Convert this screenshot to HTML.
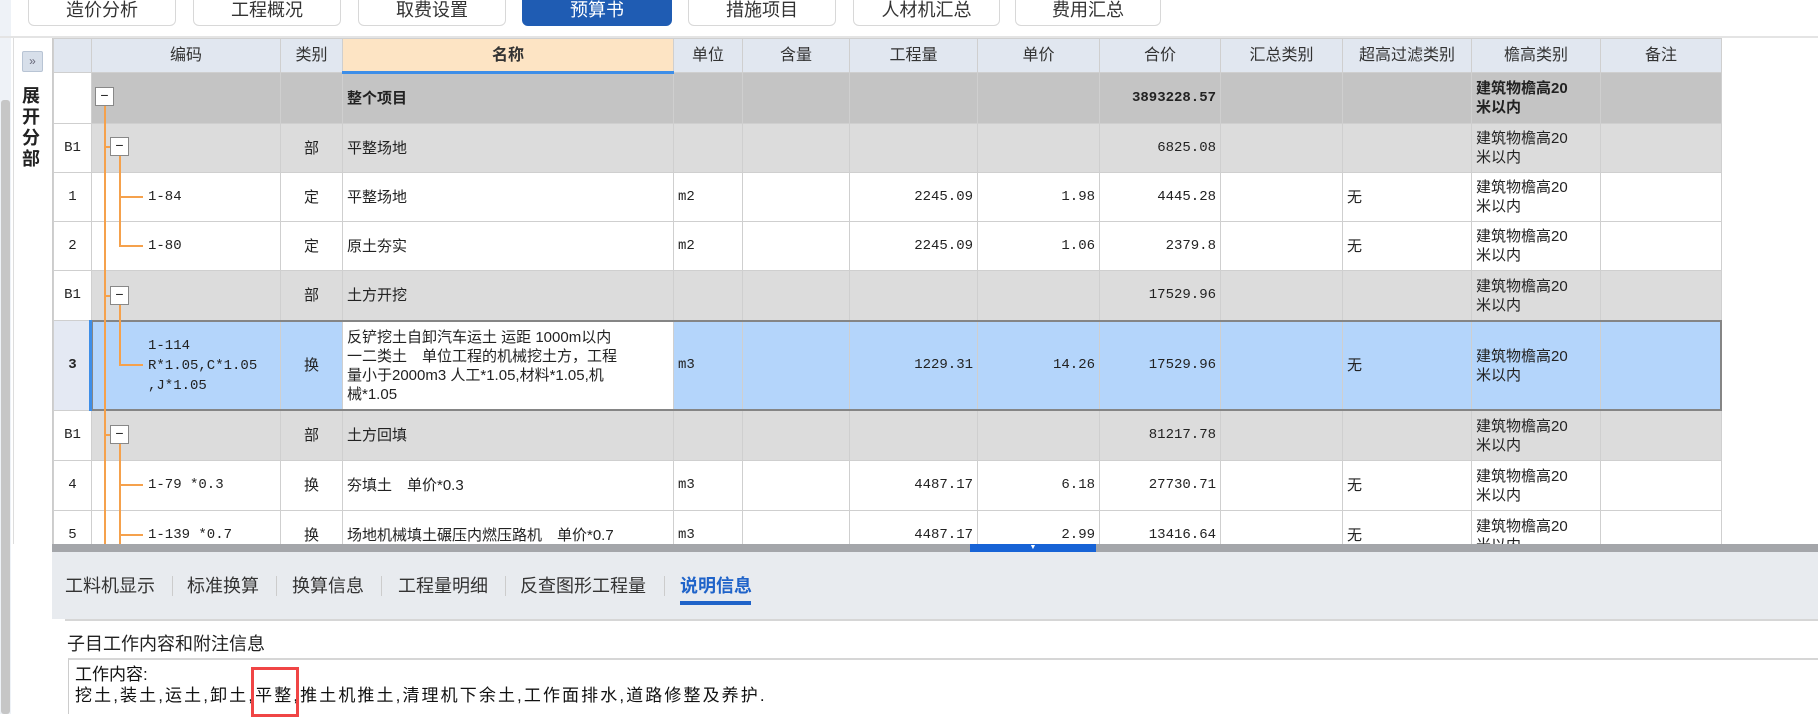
<!DOCTYPE html>
<html><head><meta charset="utf-8"><style>
*{margin:0;padding:0;box-sizing:border-box}
body{width:1818px;height:714px;overflow:hidden;background:#fff;font-family:"Liberation Sans","Noto Sans CJK SC",sans-serif;font-size:15px;color:#222;position:relative}
.a{position:absolute}
.tab{position:absolute;top:-6px;height:32px;border:1px solid #d8d8d8;border-radius:0 0 6px 6px;background:#fff;text-align:center;line-height:30px;font-size:18px;color:#333}
.tab.on{background:#1f5cb3;color:#fff;border-color:#1f5cb3}
table{position:absolute;left:53px;top:38px;border-collapse:collapse;table-layout:fixed}
td{border:1px solid #cfcfcf;padding:0 4px;font-size:15px;overflow:hidden;vertical-align:middle;line-height:19px;white-space:nowrap}
tr.h td{background:#e1e7f0;text-align:center;height:34px;color:#333;font-size:16px}
tr.h td.nm{background:#fde4c4;font-weight:bold;border-bottom:3px solid #3d8ee8}
td.rn{background:#fff;text-align:center;font-family:"Liberation Mono",monospace;font-size:14px}
tr.g0 td{background:#c4c4c4;font-weight:bold}
tr.g1 td{background:#dcdcdc}
tr.sel td{background:#b4d5fb}
tr.sel td.rn{background:#e4e9f3;font-weight:bold}
tr.g0 td.rn,tr.g1 td.rn{background:#fff}
.c{text-align:center}.r{text-align:right;font-family:"Liberation Mono",monospace;font-size:14px}
.m{font-family:"Liberation Mono",monospace;font-size:14px}
.o{background:#f5a14c;position:absolute}
.bx{position:absolute;width:19px;height:19px;border:1px solid #888;background:#fff;font-size:14px;line-height:15px;text-align:center}
</style></head><body>
<div class="a" style="left:0;top:0;width:11px;height:714px;background:#eef2f7"></div>
<div class="a" style="left:1px;top:100px;width:9px;height:614px;background:#c6c6c6;border-radius:3px"></div>
<div class="a" style="left:11px;top:0;width:2px;height:714px;background:#fff"></div>
<div class="a" style="left:0;top:36px;width:1818px;height:2px;background:#e4e4e4"></div>
<div class="a" style="left:13px;top:38px;width:40px;height:506px;background:#fff;border-right:1px solid #ccc;border-left:1px solid #ddd"></div>
<div class="a" style="left:22px;top:51px;width:21px;height:21px;background:#d7dfea;border:1px solid #b8c4d4;border-radius:2px;font-size:12px;color:#667;text-align:center;line-height:19px">»</div>
<div class="a" style="left:21px;top:86px;width:20px;font-weight:bold;font-size:18px;line-height:21px;text-align:center">展<br>开<br>分<br>部</div>
<div class="tab" style="left:28px;width:148px">造价分析</div>
<div class="tab" style="left:193px;width:148px">工程概况</div>
<div class="tab" style="left:358px;width:148px">取费设置</div>
<div class="tab on" style="left:522px;width:150px">预算书</div>
<div class="tab" style="left:688px;width:148px">措施项目</div>
<div class="tab" style="left:853px;width:147px">人材机汇总</div>
<div class="tab" style="left:1015px;width:146px">费用汇总</div>
<div class="a" style="left:53px;top:38px;width:1670px;height:506px;overflow:hidden">
<table style="left:0;top:0">
<colgroup><col style="width:38px"><col style="width:189px"><col style="width:62px"><col style="width:331px"><col style="width:69px"><col style="width:107px"><col style="width:128px"><col style="width:122px"><col style="width:121px"><col style="width:122px"><col style="width:129px"><col style="width:129px"><col style="width:121px"></colgroup>
<tr class="h"><td></td><td>编码</td><td>类别</td><td class="nm">名称</td><td>单位</td><td>含量</td><td>工程量</td><td>单价</td><td>合价</td><td>汇总类别</td><td>超高过滤类别</td><td>檐高类别</td><td>备注</td></tr>
<tr class="g0" style="height:51px"><td class="rn"></td><td></td><td></td><td>整个项目</td><td></td><td></td><td></td><td></td><td class="r" style="font-weight:bold">3893228.57</td><td></td><td></td><td>建筑物檐高20<br>米以内</td><td></td></tr>
<tr class="g1" style="height:49px"><td class="rn">B1</td><td></td><td class="c">部</td><td>平整场地</td><td></td><td></td><td></td><td></td><td class="r">6825.08</td><td></td><td></td><td>建筑物檐高20<br>米以内</td><td></td></tr>
<tr style="height:49px"><td class="rn">1</td><td class="m" style="padding-left:56px">1-84</td><td class="c">定</td><td>平整场地</td><td class="m">m2</td><td></td><td class="r">2245.09</td><td class="r">1.98</td><td class="r">4445.28</td><td></td><td>无</td><td>建筑物檐高20<br>米以内</td><td></td></tr>
<tr style="height:49px"><td class="rn">2</td><td class="m" style="padding-left:56px">1-80</td><td class="c">定</td><td>原土夯实</td><td class="m">m2</td><td></td><td class="r">2245.09</td><td class="r">1.06</td><td class="r">2379.8</td><td></td><td>无</td><td>建筑物檐高20<br>米以内</td><td></td></tr>
<tr class="g1" style="height:50px"><td class="rn">B1</td><td></td><td class="c">部</td><td>土方开挖</td><td></td><td></td><td></td><td></td><td class="r">17529.96</td><td></td><td></td><td>建筑物檐高20<br>米以内</td><td></td></tr>
<tr class="sel" style="height:90px"><td class="rn">3</td><td class="m" style="padding-left:56px;line-height:20px">1-114<br>R*1.05,C*1.05<br>,J*1.05</td><td class="c">换</td><td style="background:#fff;line-height:19px;font-size:15px">反铲挖土自卸汽车运土 运距 1000m以内<br>一二类土　单位工程的机械挖土方，工程<br>量小于2000m3 人工*1.05,材料*1.05,机<br>械*1.05</td><td class="m">m3</td><td></td><td class="r">1229.31</td><td class="r">14.26</td><td class="r">17529.96</td><td></td><td>无</td><td>建筑物檐高20<br>米以内</td><td></td></tr>
<tr class="g1" style="height:50px"><td class="rn">B1</td><td></td><td class="c">部</td><td>土方回填</td><td></td><td></td><td></td><td></td><td class="r">81217.78</td><td></td><td></td><td>建筑物檐高20<br>米以内</td><td></td></tr>
<tr style="height:50px"><td class="rn">4</td><td class="m" style="padding-left:56px">1-79 *0.3</td><td class="c">换</td><td>夯填土　单价*0.3</td><td class="m">m3</td><td></td><td class="r">4487.17</td><td class="r">6.18</td><td class="r">27730.71</td><td></td><td>无</td><td>建筑物檐高20<br>米以内</td><td></td></tr>
<tr style="height:50px"><td class="rn">5</td><td class="m" style="padding-left:56px">1-139 *0.7</td><td class="c">换</td><td>场地机械填土碾压内燃压路机　单价*0.7</td><td class="m">m3</td><td></td><td class="r">4487.17</td><td class="r">2.99</td><td class="r">13416.64</td><td></td><td>无</td><td>建筑物檐高20<br>米以内</td><td></td></tr>
</table>
</div>
<div class="a" style="left:91px;top:320px;width:1631px;height:91px;border:2px solid #858585"></div>
<div class="a" style="left:89px;top:320px;width:3px;height:91px;background:#3d8ee8"></div>
<div class="o" style="left:104px;top:106px;width:2px;height:438px"></div>
<div class="o" style="left:104px;top:146px;width:6px;height:2px"></div>
<div class="o" style="left:119px;top:156px;width:2px;height:90px"></div>
<div class="o" style="left:119px;top:196px;width:24px;height:2px"></div>
<div class="o" style="left:119px;top:245px;width:24px;height:2px"></div>
<div class="o" style="left:104px;top:295px;width:6px;height:2px"></div>
<div class="o" style="left:119px;top:305px;width:2px;height:60px"></div>
<div class="o" style="left:119px;top:364px;width:24px;height:2px"></div>
<div class="o" style="left:104px;top:434px;width:6px;height:2px"></div>
<div class="o" style="left:119px;top:444px;width:2px;height:100px"></div>
<div class="o" style="left:119px;top:484px;width:24px;height:2px"></div>
<div class="o" style="left:119px;top:534px;width:24px;height:2px"></div>
<div class="bx" style="left:95px;top:87px">−</div>
<div class="bx" style="left:110px;top:137px">−</div>
<div class="bx" style="left:110px;top:286px">−</div>
<div class="bx" style="left:110px;top:425px">−</div>
<div class="a" style="left:52px;top:544px;width:1766px;height:8px;background:#a4a6aa"></div>
<div class="a" style="left:970px;top:544px;width:126px;height:8px;background:#1763d6;color:#fff;font-size:7px;text-align:center;line-height:8px">▼</div>
<div class="a" style="left:52px;top:552px;width:1766px;height:67px;background:#e8ebef"></div>
<div class="a" style="left:65px;top:619px;width:1753px;height:2px;background:#d6d6d6"></div>
<div class="a" style="top:572px;left:65px;font-size:18px;color:#333;white-space:nowrap">
<span class="a" style="left:0">工料机显示</span>
<span class="a" style="left:107px;top:4px;width:1px;height:20px;background:#ccc"></span>
<span class="a" style="left:122px">标准换算</span>
<span class="a" style="left:211px;top:4px;width:1px;height:20px;background:#ccc"></span>
<span class="a" style="left:227px">换算信息</span>
<span class="a" style="left:316px;top:4px;width:1px;height:20px;background:#ccc"></span>
<span class="a" style="left:333px">工程量明细</span>
<span class="a" style="left:440px;top:4px;width:1px;height:20px;background:#ccc"></span>
<span class="a" style="left:455px">反查图形工程量</span>
<span class="a" style="left:599px;top:4px;width:1px;height:20px;background:#ccc"></span>
<span class="a" style="left:615px;color:#1f63c9;font-weight:bold">说明信息</span>
</div>
<div class="a" style="left:680px;top:601px;width:71px;height:4px;background:#1f63c9"></div>
<div class="a" style="left:67px;top:630px;font-size:18px;color:#222">子目工作内容和附注信息</div>
<div class="a" style="left:68px;top:658px;width:1750px;height:56px;border-top:2px solid #d6d6d6;border-left:1px solid #ccc"></div>
<div class="a" style="left:75px;top:664px;font-size:17px;line-height:21px;color:#111;white-space:nowrap">工作内容:</div>
<div class="a" style="left:75px;top:685px;font-size:17px;line-height:21px;color:#111;white-space:nowrap;letter-spacing:2.1px">挖土,装土,运土,卸土,平整,推土机推土,清理机下余土,工作面排水,道路修整及养护.</div>
<div class="a" style="left:251px;top:667px;width:48px;height:50px;border:3px solid #f04545"></div>
</body></html>
